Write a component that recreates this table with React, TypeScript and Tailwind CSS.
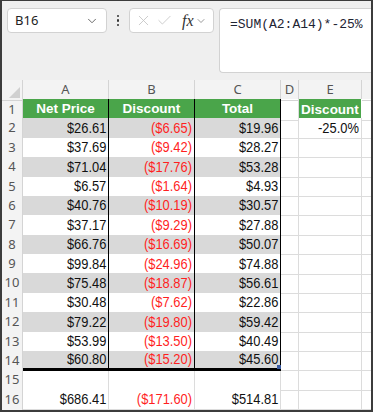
import { ChevronDown, Check, X } from "lucide-react";

const rows: [string, string, string][] = [
  ["$26.61", "($6.65)", "$19.96"],
  ["$37.69", "($9.42)", "$28.27"],
  ["$71.04", "($17.76)", "$53.28"],
  ["$6.57", "($1.64)", "$4.93"],
  ["$40.76", "($10.19)", "$30.57"],
  ["$37.17", "($9.29)", "$27.88"],
  ["$66.76", "($16.69)", "$50.07"],
  ["$99.84", "($24.96)", "$74.88"],
  ["$75.48", "($18.87)", "$56.61"],
  ["$30.48", "($7.62)", "$22.86"],
  ["$79.22", "($19.80)", "$59.42"],
  ["$53.99", "($13.50)", "$40.49"],
  ["$60.80", "($15.20)", "$45.60"],
];

const cols = "grid grid-cols-[21px_86px_86px_86px_18px_63px_1fr]";
const uiFont = "font-['Noto_Sans',sans-serif]";

function RowHead({ n }: { n: number }) {
  return (
    <div className={`flex items-center justify-center border-r border-b border-[#d4d4d4] bg-[#f3f3f3] text-[13px] text-[#555] ${uiFont}`}>
      {n}
    </div>
  );
}

function Blank({ last }: { last?: boolean }) {
  return <div className={last ? "border-b border-[#dcdcdc]" : "border-r border-b border-[#dcdcdc]"} />;
}

function Value({
  children,
  red,
  shaded,
  bottom,
  handle,
}: {
  children?: React.ReactNode;
  red?: boolean;
  shaded?: boolean;
  bottom: "thin" | "thick" | "grid";
  handle?: boolean;
}) {
  const border =
    bottom === "thick"
      ? "border-r border-b-[3px] border-black"
      : bottom === "thin"
        ? "border-r border-b border-black"
        : "border-r border-b border-[#dcdcdc]";
  return (
    <div
      className={`relative flex items-center justify-end pr-[2px] ${border} ${shaded ? "bg-[#d9d9d9]" : "bg-white"} ${red ? "text-[#ff1f1f]" : "text-[#111]"}`}
    >
      <span className="inline-block origin-right scale-x-[0.89] whitespace-nowrap font-['Liberation_Sans',Arial,sans-serif] text-[14.5px] leading-none">
        {children}
      </span>
      {handle && <div className="absolute bottom-[-1px] right-[-1px] h-[4px] w-[4px] bg-[#3b5ba0]" />}
    </div>
  );
}

function Header({ children, edge }: { children: React.ReactNode; edge?: boolean }) {
  return (
    <div
      className={`flex items-center justify-center bg-[#4aa54a] text-[13.5px] font-bold text-white font-['Liberation_Sans',Arial,sans-serif] ${edge ? "border-r border-white" : "border-r border-b-2 border-black"}`}
    >
      {children}
    </div>
  );
}

export default function App() {
  return (
    <div className="flex h-[412px] w-[373px] flex-col overflow-hidden border-x-2 border-t border-b-2 border-[#3c3c3c] bg-white">
      {/* formula bar */}
      <div className="h-[79px] shrink-0 bg-[#efefef]">
        <div className="flex items-start pl-[5px] pt-[7px]">
          <div className={`flex h-[25px] w-[100px] items-center justify-between rounded-[4px] border border-[#d2d2d2] bg-white pl-[7px] pr-[7px] text-[13px] text-[#222] ${uiFont}`}>
            <span>B16</span>
            <ChevronDown className="h-3.5 w-3.5 text-[#555]" strokeWidth={1.5} />
          </div>
          <div className="flex h-[25px] w-[22px] flex-col items-center justify-center gap-[2px]">
            <span className="h-[2.5px] w-[2.5px] rounded-full bg-[#333]" />
            <span className="h-[2.5px] w-[2.5px] rounded-full bg-[#333]" />
            <span className="h-[2.5px] w-[2.5px] rounded-full bg-[#333]" />
          </div>
          <div className="flex h-[25px] w-[85px] items-center rounded-[4px] border border-[#d2d2d2] bg-white pl-[5px]">
            <X className="h-[17px] w-[17px] text-[#c4c4c4]" strokeWidth={1.2} />
            <Check className="ml-[4px] h-[17px] w-[17px] text-[#c4c4c4]" strokeWidth={1.2} />
            <span className="ml-[9px] font-['Liberation_Serif',serif] text-[16px] italic leading-none text-[#333]">
              fx
            </span>
            <ChevronDown className="ml-[1px] h-3 w-3 text-[#777]" strokeWidth={1.5} />
          </div>
          <div className="ml-[5px] h-[65px] flex-1 rounded-l-[4px] border-y border-l border-[#d2d2d2] bg-white pl-[10px] pt-[6px] font-['Liberation_Mono',monospace] text-[13px] text-[#1e2433]">
            =SUM(A2:A14)*-25%
          </div>
        </div>
      </div>

      {/* column headers */}
      <div className={`${cols} h-[19px] shrink-0 bg-[#f3f3f3] text-[13px] text-[#555] ${uiFont}`}>
        <div className="relative border-r border-b border-[#d4d4d4]">
          <div className="absolute bottom-[2px] right-[2px] h-0 w-0 border-b-[11px] border-l-[11px] border-b-[#d0d0d0] border-l-transparent" />
        </div>
        {["A", "B", "C", "D", "E", ""].map((c, i) => (
          <div
            key={i}
            className={`flex items-center justify-center border-b border-[#d4d4d4] ${i < 5 ? "border-r" : ""}`}
          >
            {c}
          </div>
        ))}
      </div>

      {/* row 1 */}
      <div className={`${cols} h-[19.375px] shrink-0`}>
        <RowHead n={1} />
        <Header>Net Price</Header>
        <Header>Discount</Header>
        <Header>Total</Header>
        <Blank />
        <Header edge>Discount</Header>
        <Blank last />
      </div>

      {rows.map((r, i) => {
        const n = i + 2;
        const shaded = n % 2 === 0;
        const bottom = n === 14 ? "thick" : "thin";
        return (
          <div key={n} className={`${cols} h-[19.375px] shrink-0`}>
            <RowHead n={n} />
            <Value shaded={shaded} bottom={bottom}>{r[0]}</Value>
            <Value shaded={shaded} bottom={bottom} red>{r[1]}</Value>
            <Value shaded={shaded} bottom={bottom} handle={n === 14}>{r[2]}</Value>
            <Blank />
            {n === 2 ? <Value bottom="grid">-25.0%</Value> : <Blank />}
            <Blank last />
          </div>
        );
      })}

      {/* row 15 */}
      <div className={`${cols} h-[19.375px] shrink-0`}>
        <RowHead n={15} />
        <Blank />
        <Blank />
        <Blank />
        <Blank />
        <Blank />
        <Blank last />
      </div>

      {/* row 16 */}
      <div className={`${cols} h-[19.375px] shrink-0`}>
        <RowHead n={16} />
        <Value bottom="grid">$686.41</Value>
        <Value bottom="grid" red>($171.60)</Value>
        <Value bottom="grid">$514.81</Value>
        <Blank />
        <Blank />
        <Blank last />
      </div>

      <div className={`${cols} flex-1`}>
        <div className="border-r border-[#d4d4d4] bg-[#f3f3f3]" />
        <div className="border-r border-[#dcdcdc]" />
        <div className="border-r border-[#dcdcdc]" />
        <div className="border-r border-[#dcdcdc]" />
        <div className="border-r border-[#dcdcdc]" />
        <div className="border-r border-[#dcdcdc]" />
        <div />
      </div>
    </div>
  );
}
